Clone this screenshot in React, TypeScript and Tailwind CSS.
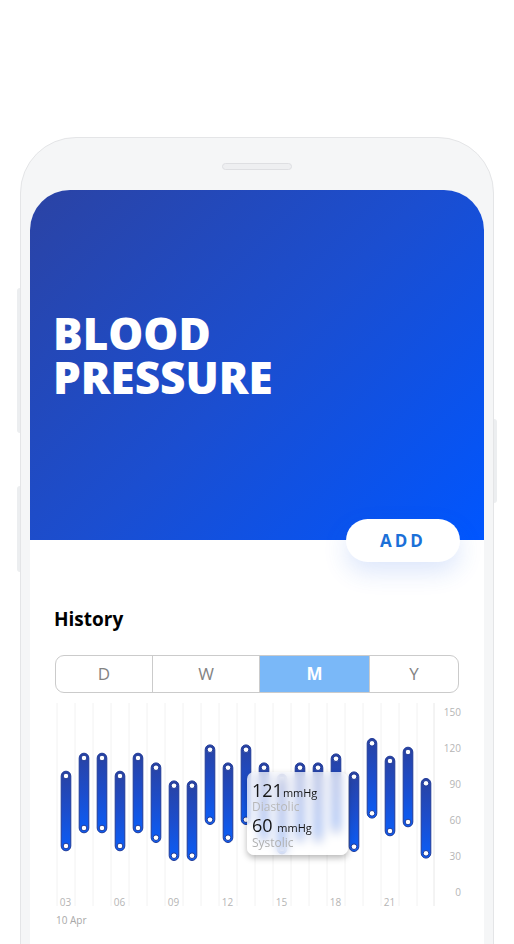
import React from "react";

// bar tops in chart-local px (circle centres); every bar spans 70px
const bars = [
  76, 58, 58, 76, 58, 67.7, 85.7, 85.7, 49.7, 67.7, 49.7, 67.7, 79, 67.7,
  67.7, 58.7, 76.7, 43.3, 61, 52, 83.3,
];

const yLabels = ["150", "120", "90", "60", "30", "0"];
const xLabels = ["03", "06", "09", "12", "15", "18", "21"];

const font = { fontFamily: '"Open Sans", "Noto Sans", sans-serif' };

function Chart() {
  return (
    <div className="relative ml-[25px] mt-[7px] h-[230px] w-[415px]">
      <svg width="415" height="230" viewBox="0 0 415 230">
        <defs>
          <linearGradient id="barFill" x1="0" y1="0" x2="0" y2="1">
            <stop offset="0" stopColor="#2942a2" />
            <stop offset="0.5" stopColor="#1c4dcc" />
            <stop offset="1" stopColor="#0a5ef8" />
          </linearGradient>
        </defs>

        {Array.from({ length: 21 }).map((_, i) => (
          <line
            key={i}
            x1={2 + i * 18}
            x2={2 + i * 18}
            y1={3}
            y2={206}
            stroke="#f2f2f2"
            strokeWidth="1"
          />
        ))}
        <line x1="379" x2="379" y1="3" y2="206" stroke="#e8e8e8" strokeWidth="1" />

        {yLabels.map((l, i) => (
          <text
            key={l}
            x="406"
            y={15.5 + i * 36}
            textAnchor="end"
            fontSize="10"
            fill="#b5b5b5"
            style={font}
          >
            {l}
          </text>
        ))}

        {xLabels.map((l, i) => (
          <text
            key={l}
            x={10.5 + i * 54}
            y="205.5"
            textAnchor="middle"
            fontSize="10"
            fill="#b5b5b5"
            style={font}
          >
            {l}
          </text>
        ))}
        <text x="1" y="223.5" fontSize="10" fill="#a8a8a8" style={font}>
          10 Apr
        </text>

        {bars.map((top, i) => {
          const cx = 11 + i * 18;
          return (
            <g key={i}>
              <rect
                x={cx - 4.8}
                y={top - 4.8}
                width="9.6"
                height="79.6"
                rx="4.8"
                fill="url(#barFill)"
                stroke="#1f3a98"
                strokeWidth="1"
              />
              <circle cx={cx} cy={top} r="2.8" fill="#fff" stroke="#1f3a98" strokeWidth="1" />
              <circle cx={cx} cy={top + 70} r="2.8" fill="#fff" stroke="#1f3a98" strokeWidth="1" />
            </g>
          );
        })}
      </svg>

      <div
        className="absolute left-[192px] top-[72px] h-[83px] w-[101px] rounded-[7px] bg-white/70 pl-[5px] pt-[8px] shadow-[0_3px_6px_rgba(0,0,0,0.28)] backdrop-blur-[4px]"
        style={font}
      >
        <div className="h-[20px] text-[18px] leading-[20px] text-[#151515]">
          121<span className="text-[11px]">mmHg</span>
        </div>
        <div className="h-[13px] text-[12px] leading-[13px] text-[#b8b8b8]">Diastolic</div>
        <div className="h-[24px] text-[18px] leading-[24px] text-[#151515]">
          60 <span className="text-[11px]">mmHg</span>
        </div>
        <div className="h-[11px] text-[12px] leading-[11px] text-[#b0b0b0]">Systolic</div>
      </div>
    </div>
  );
}

function Segments() {
  const items = [
    { label: "D", w: "w-[96px]" },
    { label: "W", w: "w-[107px]" },
    { label: "M", w: "w-[110px]", active: true },
    { label: "Y", w: "flex-1" },
  ];
  return (
    <div className="mx-[25px] mt-[23px] flex h-[38px] overflow-hidden rounded-[9px] border border-[#cbcbcb]">
      {items.map((it, i) => (
        <div
          key={it.label}
          className={`flex items-center justify-center text-[17px] ${it.w} ${
            i > 0 ? "border-l border-[#cbcbcb]" : ""
          } ${it.active ? "bg-[#7ab8f8] font-bold text-white" : "text-[#838383]"}`}
        >
          {it.label}
        </div>
      ))}
    </div>
  );
}

export default function App() {
  return (
    <div className="h-[944px] w-[514px] overflow-hidden bg-white px-[20px] pt-[137px]" style={font}>
      <div className="relative h-[830px] rounded-t-[56px] border border-[#e4e5e7] bg-[#f5f6f7]">
        {/* side keys */}
        <div className="absolute -left-[4px] top-[150px] h-[145px] w-[3px] rounded-l bg-[#eceef0]" />
        <div className="absolute -left-[4px] top-[348px] h-[86px] w-[3px] rounded-l bg-[#eceef0]" />
        <div className="absolute -right-[4px] top-[281px] h-[84px] w-[3px] rounded-r bg-[#eceef0]" />

        <div className="flex h-[52px] justify-center pt-[25px]">
          <div className="h-[7px] w-[70px] rounded-full border border-[#dedfe2] bg-[#eeeff1]" />
        </div>

        <div className="mx-[9px] h-[800px] overflow-hidden rounded-t-[40px] bg-white">
          <div className="h-[350px] bg-[linear-gradient(135deg,#2b43a4_0%,#1b4ed0_50%,#0056ff_100%)] pl-[23px] pt-[121px]">
            <h1 className="text-[44px] font-extrabold leading-[44px] text-white">
              BLOOD
              <br />
              PRESSURE
            </h1>
          </div>

          <div className="-mt-[21px] flex justify-end pr-[24px]">
            <button className="h-[43px] w-[114px] rounded-full bg-white text-[17px] font-bold tracking-[3px] text-[#1b70d8] shadow-[0_10px_24px_rgba(40,100,230,0.16)]">
              ADD
            </button>
          </div>

          <h2 className="ml-[24px] mt-[44px] text-[19px] font-bold leading-[26px] text-black">History</h2>

          <Segments />
          <Chart />
        </div>
      </div>
    </div>
  );
}
